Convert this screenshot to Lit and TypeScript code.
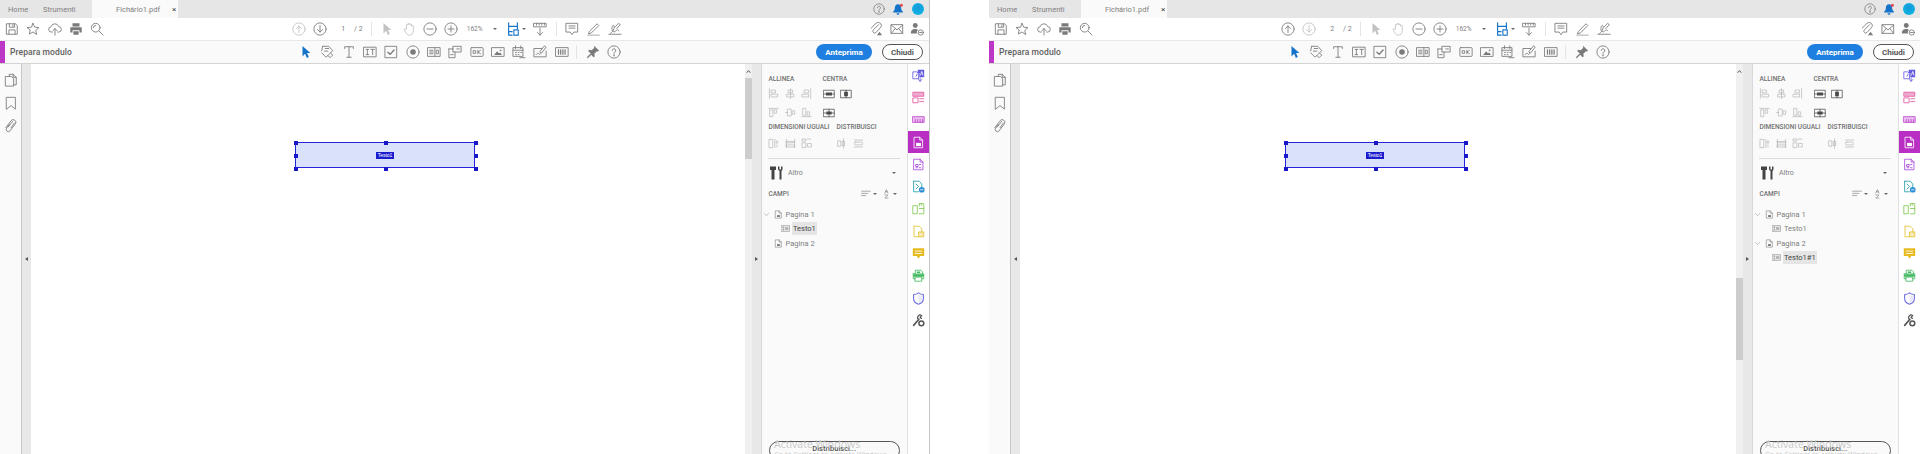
import { LitElement, html, css, svg, nothing } from "lit";
import { customElement, property } from "lit/decorators.js";

const I: Record<string, any> = {
  save: svg`<path d="M2 2h10l2 2v10H2z M5 2v4h6V2 M4.5 14V9h7v5 M9 3v2"/>`,
  star: svg`<path d="M8 1.5l2 4.4 4.8.5-3.6 3.2 1 4.7L8 11.4l-4.2 2.4 1-4.7L1.2 6.4 6 5.9z"/>`,
  cloud: svg`<path d="M5 11.500H4a3 3 0 0 1-.5-6 4.500 4.500 0 0 1 8.700-.2A3 3 0 0 1 12 11.500h-1 M8 15V7.500 M5.500 10 8 7.500l2.500 2.500"/>`,
  print: svg`<path fill="currentColor" stroke="none" d="M4 1.500h8V5H4z M1.500 6h13v6H12V9.500H4V12H1.500z M5 10.500h6v4H5z"/>`,
  search: svg`<circle cx="6.500" cy="6.500" r="5"/><path d="M10.200 10.200 15 15 M3.800 6.500a2.700 2.700 0 0 1 2.700-2.700"/>`,
  up: svg`<circle cx="8" cy="8" r="7"/><path d="M8 12V4.500 M5 7.500l3-3 3 3"/>`,
  down: svg`<circle cx="8" cy="8" r="7"/><path d="M8 4v7.500 M5 8.500l3 3 3-3"/>`,
  minus: svg`<circle cx="8" cy="8" r="7"/><path d="M4.500 8h7"/>`,
  plus: svg`<circle cx="8" cy="8" r="7"/><path d="M4.500 8h7 M8 4.500v7"/>`,
  cursor: svg`<path fill="currentColor" stroke="none" d="M4 1l9 8.200H9.200l2 4.600-2.200 1-2-4.800L4 13z"/>`,
  hand: svg`<path d="M5 8V3.500a1 1 0 0 1 2 0V2.500a1 1 0 0 1 2 0v1a1 1 0 0 1 2 0v1.500a1 1 0 0 1 2 0V10c0 3-2 5-4.500 5S5.500 14 4 11.500L2.500 9c-.6-1.200.8-2 1.600-1z"/>`,
  fit: svg`<path stroke-width="1.300" d="M3 1v4h10V1 M3 15V5 M3 11h4 M3 15h4 M13 5v3"/><path stroke-width="1.300" d="M9 9h5v6H9z" stroke-dasharray="1.500 1"/>`,
  scroll: svg`<path d="M1 1.500h14v4H1z M4 1.500v2 M7 1.500v2 M10 1.500v2 M13 1.500v2 M8 7v8 M5 12l3 3 3-3"/>`,
  comment: svg`<path d="M1.500 1.500h13v10H10l-2 3-2-3H1.500z M4.500 4.500h7 M4.500 7h7"/>`,
  pen: svg`<path d="M3 10.500 11.500 2l2 2-8.500 8.500-3 1z"/><path stroke-width="1.600" stroke="#bbb" d="M1 15h13"/>`,
  sign: svg`<path d="M1 14h14 M3 13c4-3 5-8 3.500-9S3 9 6 11c2 1 3-1 4-2s1 1 2 1 M8 6l4-4.500 2 1.500-4 4.500"/>`,
  attach: svg`<path d="M11 3 5 9a2 2 0 0 0 3 3l5-5.500a3.500 3.500 0 0 0-5-5L2.500 7"/><path fill="currentColor" stroke="none" d="M9 15l3-4 3 4z"/>`,
  mail: svg`<path d="M1.500 3h13v10h-13z M1.500 3.500 8 9l6.500-5.500 M1.500 13 6 7.500 M14.500 13 10 7.500"/>`,
  user: svg`<circle cx="6" cy="4" r="2.800" fill="currentColor" stroke="none"/><path fill="currentColor" stroke="none" d="M1 13c0-4 2-5 5-5 1.500 0 2.500.3 3 1-1 1-1.500 2.500-1 4z"/><circle cx="12.300" cy="12" r="3"/><path d="M10.800 12h3"/>`,
  help: svg`<circle cx="8" cy="8" r="7"/><path d="M6 6.300a2 2 0 1 1 3 1.700c-.7.4-1 .8-1 1.700"/><path stroke-width="1.500" d="M8 11.200v1"/>`,
  bell: svg`<path fill="currentColor" stroke="none" d="M8 1.500c-3 0-4.200 2.500-4.200 5 0 2.500-1.300 4-2.300 5v1h13v-1c-1-1-2.300-2.500-2.300-5 0-2.500-1.200-5-4.200-5z M6 13.500h4a2 2 0 0 1-4 0z"/><circle cx="12.500" cy="3" r="2" fill="#e5484d" stroke="none"/>`,
  tag: svg`<path d="M3 1.500h7l4.500 5L10 11 7 14l-5-5 M3 1.500l-1 5 M6 4h4 M5 7h4"/><path d="M12 9l2.500 2.500-3 3L9 12"/>`,
  text: svg`<path d="M3 4V2h10v2 M8 2v12 M5.500 14h5"/>`,
  field: svg`<path d="M1 2.500h14v11H1z M5 5v6 M3.500 5h3 M3.500 11h3 M9 5h4 M11 5v6"/>`,
  check: svg`<path d="M1.500 1.500h13v13h-13z"/><path stroke-width="1.600" d="M4.500 8.200l2.500 2.500 4.500-5"/>`,
  radio: svg`<circle cx="8" cy="8" r="7"/><circle cx="8" cy="8" r="3.200" fill="currentColor" stroke="none"/>`,
  list: svg`<path d="M1 3h14v10H1z M9 3v10 M3 6h4 M3 8h4 M3 10h4 M11 6h2v4h-2z"/>`,
  combo: svg`<path d="M6 1.500h9v6.500H6z M1 4.500h5 M1 4.500v10h7V8 M10 4.500h3 M3 11h3"/>`,
  ok: svg`<rect x="1" y="3" width="14" height="10" rx="1"/><path d="M4 6.500h2.500v3H4z M9 6v4 M12 6 9 8l3 2"/>`,
  image: svg`<path d="M1 3h14v10H1z"/><path fill="currentColor" stroke="none" d="M3.500 11.500 7 7l2 2.500 1.500-1 2 3z"/><circle cx="11" cy="6" r="1" fill="currentColor" stroke="none"/>`,
  date: svg`<path d="M1.500 3h11v10h-11z M4 1v3 M10 1v3 M1.500 6h11 M4 8.500h1 M7 8.500h1 M10 8.500h1 M4 11h1 M7 11h1 M9 14.500h6"/>`,
  signf: svg`<path d="M10 4H1v9.500h14V7 M3.500 11c1.500-2 2.500-2 3-1s1 1 2 0 M10 9l5-6.500-2-1.500-5 6.500z"/>`,
  bar: svg`<path d="M1 3h14v10H1z"/><path stroke-width="1.400" d="M4 5.500v5 M6.500 5.500v5 M9 5.500v5 M11.500 5.500v5"/>`,
  pin: svg`<path fill="currentColor" stroke="none" d="M9.500 1 15 6.500l-1.500 1-1-.5-3 3 .5 3-1.500 1-2.500-3L2 15l-1-1 4.500-4.500-3-2.500 1-1.500 3 .5 3-3-.5-1z"/>`,
  alLeft: svg`<path d="M2 1v14 M5 3h6v4H5z M5 9h9v4H5z"/>`,
  alCenter: svg`<path d="M8 1v14 M5 3h6v4H5z M3 9h10v4H3z"/>`,
  alRight: svg`<path d="M14 1v14 M5 3h6v4H5z M2 9h9v4H2z"/>`,
  alTop: svg`<path d="M1 2h14 M3 4h4v10H3z M9.500 4h3v5h-3z"/>`,
  alMid: svg`<path d="M1 8h3 M4 3h5v10H4z M11 5.500h3v5h-3z"/>`,
  alBot: svg`<path d="M1 14h14 M3 2h4v10H3z M9.500 7h3v5h-3z"/>`,
  ctrH: svg`<path d="M1 3h14v10H1z M1 8h14"/><path fill="currentColor" stroke="none" d="M4 6h8v4H4z"/>`,
  ctrV: svg`<path d="M1 3h14v10H1z M8 3v10"/><path fill="currentColor" stroke="none" d="M5.500 5h5v6h-5z"/>`,
  ctrB: svg`<path d="M1 3h14v10H1z M1 8h14 M8 3v10"/><path fill="currentColor" stroke="none" d="M4.500 6h7v4h-7z"/>`,
  szW: svg`<path d="M2 2h5v12H2z M10 2v12 M13 4v4 M11.500 6h3 M13 10v3"/>`,
  szH: svg`<path d="M2 2v12 M14 2v12 M2 5h12v2H2z M2 10h12v3H2z"/>`,
  szB: svg`<path d="M2 1.500h5v3H2z M9 1.500h5 M2 7h5v7H2z M10 8h5v5h-5z"/>`,
  dsH: svg`<path d="M3 4h4v8H3z M11 1v14 M9.500 5h3v6h-3z"/>`,
  dsV: svg`<path d="M2 3h12 M4 6h8a2 2 0 0 1 0 4H4a2 2 0 0 1 0-4z M2 13h12"/>`,
  tools: svg`<path fill="currentColor" stroke="none" d="M1 1.500h6V5H5.500v9.500h-3V5H1z M9 1.500h1.500v3h1.500v-3H13.500v3l-1 1.500v8.500h-2V6L9 4.500z"/>`,
  sortA: svg`<path d="M1 3.500h14 M1 7h10 M1 10.500h6.500"/>`,
  sortB: svg`<path d="M4.500 6.500 7 1l2.500 5.500 M5.500 4.500h3 M4.500 9.500h5l-5 5h5"/>`,
  chev: svg`<path d="M3 5.500l5 5 5-5"/>`,
  page: svg`<path d="M3 1.500h6l4 4V14.500H3z M9 1.500v4h4"/><path fill="currentColor" stroke="none" d="M5.500 9h5v3.500h-5z"/>`,
  fieldS: svg`<path d="M1 3h14v10H1z M4 5.500v5 M3 5.500h2 M3 10.500h2 M7.500 6h5 M7.500 8h5 M7.500 10h5"/>`,
  copies: svg`<path d="M6 4V1.500h4.500L14 5v8.500h-3 M2 4h6.500L11 6.500V15H2z M10.500 1.500V5H14"/>`,
  bookmark: svg`<path d="M3 1.500h10V15l-5-4-5 4z"/>`,
  clip: svg`<path d="M6 6.500l-3 4a2.500 2.500 0 0 0 4 3l6-8a3 3 0 0 0-5-3.500l-6 8 M5 9l5-6.500 M8 10l4-5.500"/>`,
  r0: svg`<path fill="currentColor" stroke="none" d="M7 1h8v9H9V5H7z"/><path d="M1.500 3.500H6l2 2V12H1.500z"/><path d="M5 9l1.500-3 M10 15V11 M8 13l2 2.200 2-2.200"/><path stroke="#fff" d="M10.500 7.500 12 3l1.500 4.500"/>`,
  r1: svg`<path fill="currentColor" fill-opacity=".5" d="M1.500 1.500h13v5h-13z"/><path d="M1.500 8.500h6v6h-6z M9.500 9.500h5 M9.500 13h5"/>`,
  r2: svg`<path fill="currentColor" fill-opacity=".35" d="M1 4.500h14v7H1z"/><path d="M4 8v3.500 M7 8v3.500 M10 8v3.500 M13 8v3.500"/>`,
  r3: svg`<path d="M3 1.500h6.500L13 5v9.500H3z M9.500 1.500V5H13"/><path fill="currentColor" stroke="none" d="M5 8.500h6v4H5z"/>`,
  r4: svg`<path d="M2.500 1.500H10l3.500 3.500v9.500h-11z M10 1.500V5h3.500 M5 8h2.500v2.500H5z M9 8h2 M5 12h2 M9 12h2"/>`,
  r5: svg`<path d="M2 1.500h7L12 5v4 M2 1.500v13h6 M5 5l3 3-3 3"/><circle cx="12" cy="12" r="3.500" fill="#2b8fd6" stroke="none"/><path stroke="#fff" d="M10.500 12h3"/>`,
  r6: svg`<path d="M1.500 4.500h5v10h-5z M9 2h5.500v12.500H9 M9 2v3 M11.500 2v2"/><path d="M9 8h5.500"/>`,
  r7: svg`<path d="M2.500 1.500H9l3 3V9 M2.500 1.500v13H8"/><path fill="currentColor" fill-opacity=".35" d="M8.500 8.500h6v6h-6z"/>`,
  r8: svg`<path fill="currentColor" stroke="none" d="M1 1.500h14v9.500h-5l-2 3.500L6 11H1z"/><path stroke="#fff" d="M4 5h8 M4 8h8"/>`,
  r9: svg`<path d="M4 6V1.500h7l2 2V6 M1.500 6h13v6H12 M4 12H1.500V6 M4 10h8v5H4z"/><path fill="currentColor" stroke="none" d="M6 3h4v2H6z M1.500 6.500h13v3h-13z"/>`,
  r10: svg`<path stroke-width="1.300" d="M8 1c2 1.500 4 2 6 2v5c0 3.500-2.500 6-6 7-3.500-1-6-3.500-6-7V3c2 0 4-.5 6-2z"/><path fill="currentColor" fill-opacity=".15" stroke="none" d="M8 3c1.500 1 3 1.500 4.500 1.500V8c0 2.500-2 4.500-4.500 5.500z"/>`,
  r11: svg`<path stroke-width="2" d="M2 14 8.500 6.500"/><path stroke-width="1.500" d="M8 6.500a3 3 0 0 1 4-4.500L10 4l1.500 1.500"/><circle cx="11.500" cy="11.500" r="3" stroke-width="1.800"/>`,
};

const ic = (n: string, cls = "") =>
  html`<svg class="ic ${cls}" viewBox="0 0 16 16"><g>${I[n]}</g></svg>`;
const cell = (n: string, cls = "") => html`<span class="cell">${ic(n, cls)}</span>`;

const RAIL = ["r0", "r1", "r2", "r3", "r4", "r5", "r6", "r7", "r8", "r9", "r10", "r11"];

@customElement("pdf-window")
class PdfWindow extends LitElement {
  @property({ type: Number }) page = 1;

  static styles = css`
    :host { display: flex; flex-direction: column; height: 454px; flex: none; background: #fff; border-right: 1px solid #c4c4c4; box-sizing: border-box; overflow: hidden; position: relative; font-family: Roboto, "Open Sans", sans-serif; color: #555; }
    .ic { display: block; width: 14px; height: 14px; fill: none; stroke: currentColor; stroke-width: 1; stroke-linejoin: round; stroke-linecap: round; color: #7a7a7a; }
    .sm { width: 12px; height: 12px; }
    .lg { width: 16px; height: 16px; }
    .ic.off { color: #c2c2c2; }
    .ic.blue { color: #1473c8; }
    .cell { width: 21.3px; display: flex; justify-content: center; align-items: center; flex: none; }
    .tabs { height: 18px; background: #e6e6e6; display: flex; align-items: center; font-size: 7.5px; color: #808080; flex: none; }
    .tabs span.t { padding-left: 8px; width: 35px; box-sizing: border-box; }
    .tabs span.t2 { width: 57px; padding-left: 8px; box-sizing: border-box; }
    .active { width: 86px; height: 18px; background: #fafafa; display: flex; align-items: center; box-sizing: border-box; padding-left: 24px; color: #808080; margin-left: 0; }
    .active b { font-weight: 400; width: 56px; }
    .active i { font-style: normal; font-size: 8px; color: #444; }
    .tabr { margin-left: auto; display: flex; align-items: center; gap: 7px; padding-right: 5px; }
    .avatar { width: 12px; height: 12px; border-radius: 50%; background: radial-gradient(circle at 50% 40%, #1397d8, #0dbde8); margin-left: 1px; }
    .tool { height: 23px; background: #fff; display: grid; grid-template-columns: 288.500px 1fr auto; align-items: center; border-bottom: 1px solid #e8e8e8; box-sizing: border-box; flex: none; }
    .tool .g { display: flex; align-items: center; }
    .g.l { padding-left: 1.500px; }
    .pg { width: 22px; text-align: right; padding-right: 8px; box-sizing: border-box; font-size: 7px; color: #808080; flex: none; }
    .pgt { width: 17px; font-size: 7px; color: #808080; flex: none; padding-left: 1px; box-sizing: border-box; }
    .sep { width: 1px; height: 14px; background: #e4e4e4; margin: 0 4.500px 0 1px; flex: none; }
    .zoom { width: 41px; font-size: 6.500px; color: #808080; padding-left: 5px; flex: none; display: flex; align-items: center; box-sizing: border-box; justify-content: space-between; padding-right: 6px; }
    .car { width: 0; height: 0; border: 2px solid transparent; border-top: 2.500px solid #666; border-bottom: 0; flex: none; }
    .fit { width: 27px; display: flex; align-items: center; padding-left: 3.500px; gap: 2px; box-sizing: border-box; flex: none; }
    .g.r { gap: 6.500px; padding-right: 5px; }
    .form { height: 22px; background: #fafafa; border-bottom: 1px solid #d4d4d4; box-sizing: content-box; display: flex; align-items: center; flex: none; }
    .mark { width: 5px; height: 22px; background: #bd37c6; flex: none; }
    .title { width: 290.500px; padding-left: 5px; box-sizing: border-box; font-size: 8.500px; font-weight: 500; color: #606060; flex: none; letter-spacing: 0.1px; }
    .tl2 { display: flex; align-items: center; }
    .sep.s2 { margin-left: 4px; margin-right: 5px; }
    .sep.s3 { margin-left: 5px; }
    .btns { margin-left: auto; display: flex; gap: 10px; padding-right: 6px; }
    .btn { height: 16px; border-radius: 8px; display: flex; align-items: center; justify-content: center; font-size: 8px; font-weight: 700; box-sizing: border-box; }
    .pri { width: 56px; background: #1f7fe0; color: #fff; }
    .sec { width: 41px; border: 1px solid #555; color: #555; background: #fff; }
    .body { flex: 1; display: flex; min-height: 0; }
    .nav { width: 22px; box-sizing: border-box; background: #fafafa; border-right: 1px solid #c8c8c8; display: flex; flex-direction: column; align-items: center; padding-top: 9px; gap: 9px; flex: none; }
    .gut { width: 9px; background: #e8e8e8; display: flex; align-items: center; flex: none; justify-content: center; }
    .tri { width: 0; height: 0; border: 2.500px solid transparent; flex: none; }
    .tl { border-right: 3px solid #555; border-left: 0; }
    .tr { border-left: 3px solid #555; border-right: 0; }
    .canvas { flex: 1; position: relative; background: #fff; min-width: 0; }
    .sel { position: absolute; top: 78px; width: 180px; height: 26px; background: #d9e1fb; border: 1px solid #2424d8; box-sizing: border-box; display: flex; align-items: center; justify-content: center; }
    .lbl { background: #1c1ccf; color: #fff; font-size: 5px; padding: 1px 2px; line-height: 5px; font-family: "Liberation Sans", sans-serif; }
    .h { position: absolute; width: 4px; height: 4px; background: #1818c8; }
    .sb { width: 7px; background: #f0f0f0; flex: none; display: flex; flex-direction: column; position: relative; }
    .sb .arrow { height: 14px; display: flex; align-items: center; justify-content: center; flex: none; }
    .sb .arrow svg { width: 5px; height: 5px; color: #555; }
    .thumb { background: #cdcdcd; flex: none; width: 100%; }
    .gut2 { width: 10px; background: #e8e8e8; border-right: 1px solid #d8d8d8; box-sizing: border-box; display: flex; align-items: center; justify-content: center; flex: none; }
    .pw { position: relative; width: 145px; flex: none; display: flex; flex-direction: column; min-height: 0; }
    .panel { flex: 1; background: #fafafa; display: flex; flex-direction: column; min-width: 0; min-height: 0; font-size: 7px; }
    .hd { display: flex; font-size: 6.500px; font-weight: 500; color: #707070; padding-left: 6.500px; height: 10px; line-height: 10px; white-space: nowrap; align-items: center; flex: none; }
    .hd.a { margin-top: 10px; }
    .hd .x1 { width: 54px; }
    .hd .x2 { width: 68px; }
    .row { display: flex; align-items: center; padding-left: 3.500px; height: 19px; flex: none; }
    .row .c { width: 16.500px; display: flex; justify-content: center; flex: none; }
    .row .ic { width: 11px; height: 11px; color: #b4b4b4; }
    .row .dk .ic { color: #4a4a4a; width: 12px; height: 12px; }
    .g5 { margin-left: 6px; }
    .g19 { margin-left: 18.500px; }
    .row3 { height: 23px; }
    .div { height: 1px; background: #dcdcdc; margin: 3px 7px 0 6px; flex: none; }
    .more { height: 28px; display: flex; align-items: center; padding: 0 11px 0 7px; flex: none; font-size: 7px; color: #808080; }
    .more .lg { color: #444; margin-right: 3px; }
    .more .car { margin-left: auto; }
    .camp { height: 14px; display: flex; align-items: center; padding: 0 10px 0 6.500px; font-size: 6.500px; font-weight: 500; color: #707070; flex: none; }
    .camp .s { display: flex; align-items: center; gap: 1.500px; }
    .camp .ic { width: 10px; height: 10px; }
    .camp .sp { margin-left: auto; }
    .camp .s2 { margin-left: 5px; }
    .tree { padding-top: 6px; flex: 1; min-height: 0; }
    .tn { height: 14.500px; display: flex; align-items: center; font-size: 7.500px; color: #808080; }
    .tn .ic { width: 9px; height: 9px; }
    .tw { width: 7px; margin-left: 1px; margin-right: 3.500px; display: flex; justify-content: center; }
    .tn .pi { margin-right: 3px; }
    .tc { padding-left: 19px; }
    .tc .ic { margin-right: 2px; }
    .tc span { padding: 0 1px; line-height: 13px; }
    .tc span.cur { background: #e5e5e5; color: #444; }
    .dist { margin: 0 7px -6px 6.500px; height: 19px; border: 1px solid #555; border-radius: 11px; box-sizing: border-box; display: flex; justify-content: center; padding-top: 1px; font-size: 7.500px; font-weight: 500; color: #555; flex: none; line-height: 11px; }
    .wm { position: absolute; left: 12px; bottom: -1px; pointer-events: none; color: #c9c9c9; white-space: nowrap; font-family: "Open Sans", sans-serif; }
    .wm div:first-child { font-size: 10.500px; line-height: 14px; }
    .wm div:last-child { font-size: 7px; line-height: 8px; height: 4px; overflow: hidden; }
    .rail { width: 22px; box-sizing: border-box; flex: none; background: #fff; border-left: 1px solid #e0e0e0; display: flex; flex-direction: column; }
    .ri { height: 22.300px; display: flex; align-items: center; justify-content: center; flex: none; }
    .ri .ic { width: 13px; height: 13px; }
    .ri.on { background: #b92fc4; }
    .ri.on .ic { color: #fff; }
    .ic.c0 { color: #6259e0; } .ic.c1 { color: #e2559f; } .ic.c2 { color: #bf45cf; } .ic.c4 { color: #a847dc; }
    .ic.c5 { color: #1f9aa8; } .ic.c6 { color: #7fc64c; } .ic.c7 { color: #e4c22c; } .ic.c8 { color: #e6bb22; }
    .ic.c9 { color: #42b860; } .ic.c10 { color: #6a6ae0; } .ic.c11 { color: #555; }
  `;

  render() {
    const two = this.page === 2;
    const leftSel = two ? 265 : 264;
    const handles = [
      [-2.5, -2.5], [87.5, -2.5], [177.5, -2.5], [-2.5, 10.5], [177.5, 10.5], [-2.5, 23.5], [87.5, 23.5], [177.5, 23.5],
    ];
    return html`
      <div class="tabs">
        <span class="t">Home</span><span class="t2">Strumenti</span>
        <div class="active"><b>Fichário1.pdf</b><i>×</i></div>
        <div class="tabr">${ic("help", "sm")}${ic("bell", "sm blue")}<span class="avatar"></span></div>
      </div>
      <div class="tool">
        <div class="g l">${["save", "star", "cloud", "print", "search"].map((n) => cell(n))}</div>
        <div class="g">
          ${cell("up", two ? "" : "off")}${cell("down", two ? "off" : "")}
          <span class="pg">${this.page}</span><span class="pgt">/ 2</span><span class="sep"></span>
          ${cell("cursor", "off")}${cell("hand", "off")}${cell("minus")}${cell("plus")}
          <span class="zoom">162%<span class="car"></span></span>
          <span class="fit">${ic("fit", "blue")}<span class="car"></span></span>
          ${cell("scroll")}<span class="sep s3"></span>
          ${cell("comment")}${cell("pen")}${cell("sign")}
        </div>
        <div class="g r">${ic("attach")}${ic("mail")}${ic("user")}</div>
      </div>
      <div class="form">
        <span class="mark"></span><span class="title">Prepara modulo</span>
        <div class="tl2">
          ${cell("cursor", "blue")}
          ${["tag", "text", "field", "check", "radio", "list", "combo", "ok", "image", "date", "signf", "bar"].map((n) => cell(n))}
          <span class="sep s2"></span>
          ${cell("pin")}${cell("help")}
        </div>
        <div class="btns"><span class="btn pri">Anteprima</span><span class="btn sec">Chiudi</span></div>
      </div>
      <div class="body">
        <div class="nav">${ic("copies")}${ic("bookmark")}${ic("clip")}</div>
        <div class="gut"><span class="tri tl"></span></div>
        <div class="canvas">
          <div class="sel" style="left:${leftSel}px">
            <span class="lbl">Testo1</span>
            ${handles.map(([x, y]) => html`<span class="h" style="left:${x}px;top:${y}px"></span>`)}
          </div>
        </div>
        <div class="sb">
          <div class="arrow"><svg class="ic" viewBox="0 0 16 16"><path stroke-width="3" d="M3 11l5-6 5 6"/></svg></div>
          <div class="thumb" style="margin-top:${two ? 200 : 0}px;height:${two ? 82 : 81}px"></div>
        </div>
        <div class="gut2"><span class="tri tr"></span></div>
        <div class="pw">
          <div class="panel">
            <div class="hd a"><span class="x1">ALLINEA</span><span>CENTRA</span></div>
            <div class="row">
              ${["alLeft", "alCenter", "alRight"].map((n) => html`<span class="c">${ic(n)}</span>`)}
              <span class="c dk g5">${ic("ctrH")}</span><span class="c dk">${ic("ctrV")}</span>
            </div>
            <div class="row">
              ${["alTop", "alMid", "alBot"].map((n) => html`<span class="c">${ic(n)}</span>`)}
              <span class="c dk g5">${ic("ctrB")}</span>
            </div>
            <div class="hd"><span class="x2">DIMENSIONI UGUALI</span><span>DISTRIBUISCI</span></div>
            <div class="row row3">
              ${["szW", "szH", "szB"].map((n) => html`<span class="c">${ic(n)}</span>`)}
              <span class="c g19">${ic("dsH")}</span><span class="c">${ic("dsV")}</span>
            </div>
            <div class="div"></div>
            <div class="more">${ic("tools", "lg")}<span>Altro</span><span class="car"></span></div>
            <div class="camp">
              <span>CAMPI</span>
              <span class="s sp">${ic("sortA")}<span class="car"></span></span>
              <span class="s s2">${ic("sortB")}<span class="car"></span></span>
            </div>
            <div class="tree">
              <div class="tn"><span class="tw">${ic("chev")}</span>${ic("page", "pi")}<span>Pagina 1</span></div>
              <div class="tn tc">${ic("fieldS")}<span class="${two ? "" : "cur"}">Testo1</span></div>
              <div class="tn">
                <span class="tw">${two ? ic("chev") : nothing}</span>${ic("page", "pi")}<span>Pagina 2</span>
              </div>
              ${two ? html`<div class="tn tc">${ic("fieldS")}<span class="cur">Testo1#1</span></div>` : nothing}
            </div>
            <div class="dist">Distribuisci...</div>
          </div>
          <div class="wm"><div>Activate Windows</div><div>Go to Settings to activate Windows.</div></div>
        </div>
        <div class="rail">
          ${RAIL.map(
            (n, i) => html`<div class="ri ${i === 3 ? "on" : ""}">${ic(n, i === 3 ? "" : `c${i}`)}</div>`
          )}
        </div>
      </div>
    `;
  }
}

@customElement("app-root")
class AppRoot extends LitElement {
  static styles = css`
    :host { display: flex; width: 1920px; height: 454px; overflow: hidden; background: #fff; }
    .a { width: 930px; }
    .b { width: 932px; margin-left: 59px; }
  `;
  render() {
    return html`<pdf-window class="a" .page=${1}></pdf-window><pdf-window class="b" .page=${2}></pdf-window>`;
  }
}
